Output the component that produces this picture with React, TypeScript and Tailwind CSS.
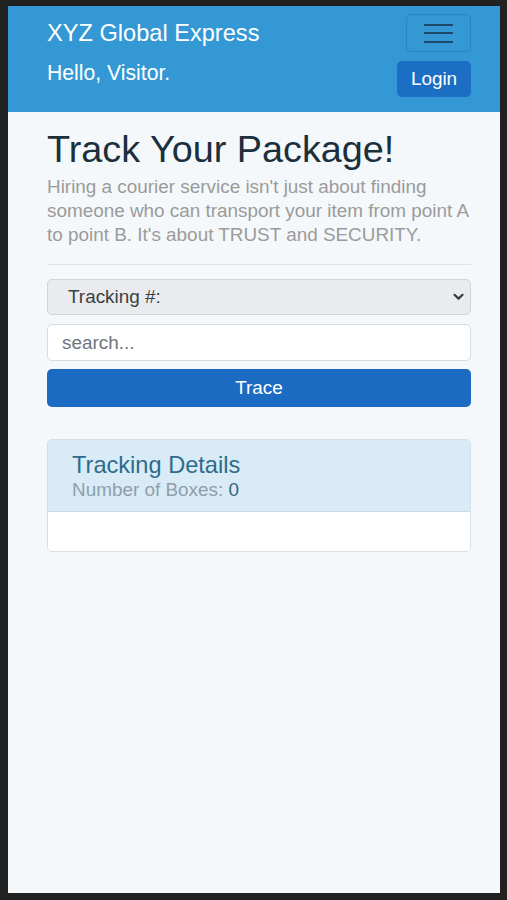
import React from "react";

const font = { fontFamily: '"Liberation Sans", Arial, sans-serif' };

const Header = () => {
  return (
    <header className="bg-[#3398d4] pl-[39px] pr-[29px] pt-[8px] pb-[15px] flex flex-col gap-[9px]">
      <div className="flex items-center justify-between h-[38px]">
        <span className="text-white text-[23.6px] leading-none mt-[1px]">XYZ Global Express</span>
        <button className="w-[65px] h-[38px] rounded-[5px] border border-[#2a86bf] flex flex-col items-center justify-center gap-[6.5px]">
          <span className="block w-[29px] h-[2px] bg-[#1b4a68]" />
          <span className="block w-[29px] h-[2px] bg-[#1b4a68]" />
          <span className="block w-[29px] h-[2px] bg-[#1b4a68]" />
        </button>
      </div>
      <div className="flex items-start justify-between h-[36px]">
        <span className="text-white text-[21.2px] leading-[24px]">Hello, Visitor.</span>
        <button className="h-[36px] w-[74px] rounded-[5px] bg-[#1b6ec3] text-white text-[18.9px]">
          Login
        </button>
      </div>
    </header>
  );
};

const TrackForm = () => {
  return (
    <div className="flex flex-col">
      <div className="relative mt-[14px] h-[36px]">
        <select
          className="appearance-none w-full h-full rounded-[5px] border border-[#cfd5da] bg-[#e9ebee] pl-[20px] text-[18.9px] text-[#3b3f44] outline-none"
          defaultValue="tracking"
        >
          <option value="tracking">Tracking #:</option>
        </select>
        <svg
          className="absolute right-[7px] top-[14px] pointer-events-none"
          width="11"
          height="8"
          viewBox="0 0 11 8"
          fill="none"
        >
          <path d="M1.5 1.8 L5.5 5.6 L9.5 1.8" stroke="#343a40" strokeWidth="2.2" strokeLinecap="round" strokeLinejoin="round" />
        </svg>
      </div>
      <input
        className="mt-[9px] h-[37px] w-full rounded-[5px] border border-[#d6dbe0] bg-white pl-[14px] text-[18.9px] text-[#333] placeholder:text-[#6e757c] outline-none"
        placeholder="search..."
      />
      <button className="mt-[8px] h-[38px] w-full rounded-[5px] bg-[#1b6bc2] text-white text-[18.9px]">
        Trace
      </button>
    </div>
  );
};

const TrackingCard = () => {
  return (
    <div className="mt-[32px] rounded-[5px] border border-[#d7dfe4] overflow-hidden">
      <div className="h-[72px] bg-[#d9ebf6] border-b border-[#cbdbe5] pl-[24px] pt-[12px]">
        <h5 className="text-[23.6px] leading-[27px] text-[#2f6b8b]">Tracking Details</h5>
        <p className="text-[18.9px] leading-[22px] text-[#8f9fab]">
          Number of Boxes: <span className="text-[#35667f]">0</span>
        </p>
      </div>
      <div className="h-[39px] bg-white" />
    </div>
  );
};

export default function App() {
  return (
    <div className="h-[900px] bg-[#212121] pt-[6px] pl-[8px] pr-[7px] pb-[7px]" style={font}>
      <div className="h-full flex flex-col bg-[#f4f8fa] overflow-hidden">
        <Header />
        <main className="pl-[39px] pr-[29px]">
          <h1 className="mt-[15px] text-[37.8px] leading-[44px] text-[#1b2f3c]">Track Your Package!</h1>
          <p className="mt-[4px] text-[18.9px] leading-[24px] text-[#9b9b9b]">
            Hiring a courier service isn't just about finding someone who can transport your item from point A to
            point B. It's about TRUST and SECURITY.
          </p>
          <hr className="mt-[17px] border-0 h-px bg-[#dde2e5]" />
          <TrackForm />
          <TrackingCard />
        </main>
      </div>
    </div>
  );
}
